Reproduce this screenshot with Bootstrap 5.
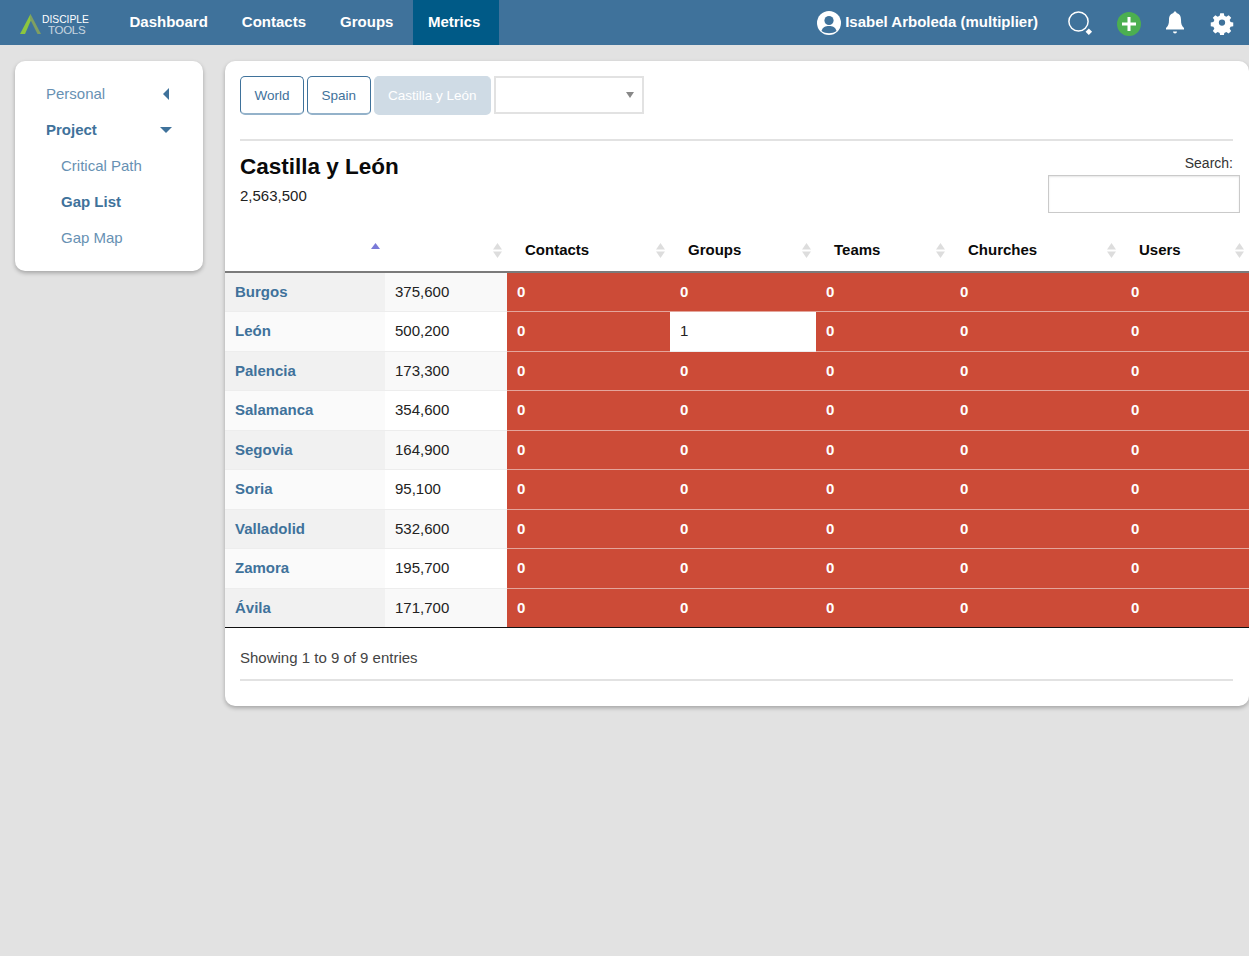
<!doctype html>
<html lang="en"><head><meta charset="utf-8"><title>Metrics</title>
<link rel="stylesheet" href="https://cdn.jsdelivr.net/npm/bootstrap@5.3.0/dist/css/bootstrap.min.css">
<style>
html,body{height:100%}
body{background:#e2e2e2;font-family:"Liberation Sans",Arial,sans-serif;font-size:15px;color:#222;overflow-x:hidden}
.topbar{background:#3f729b;height:45px}
.logo-box{width:112.5px;padding-left:20px}
.logo-words{color:#fff;font-size:10.3px;margin-left:1px;margin-top:5px}
.logo-words div{line-height:11px}
.logo-words .w2{font-size:11.500px;margin-left:6px;opacity:.7;letter-spacing:-.3px}
.top-item{color:#fff;font-weight:700;font-size:15px;padding:0 17px;height:45px;display:flex;align-items:center;text-decoration:none}
.top-item.on{background:#005a87;padding:0 19px 0 14.500px;margin-left:3px}
.who{color:#fff;font-weight:700;font-size:15px;margin-right:30px}
.ic-user{margin-right:4px;margin-top:1px}
.ic-search{margin-right:24px;margin-top:1px}
.ic-add{margin-right:24px;margin-top:2px}
.ic-bell{margin-right:25px}
.ic-gear{margin-right:15px}
.page-wrap{padding:16px 0 0 15px;gap:22px}
.panel{background:#fff;border-radius:10px;box-shadow:0 2px 4px rgba(0,0,0,.28)}
.side{width:188px;height:210px;padding:15px 0 0 31px;flex:none}
.side-item{height:36px;display:flex;align-items:center;justify-content:space-between;color:#6791b3;text-decoration:none;padding-right:34px}
.side-item.sel{color:#3f729b;font-weight:700}
.side-item.sub{padding-left:15px}
.tri-l{width:0;height:0;border:6px solid transparent;border-right:6px solid #3f729b;border-left:0}
.tri-d{width:0;height:0;border:6px solid transparent;border-top:6px solid #3f729b;border-bottom:0;margin-right:-3px}
.main-panel{flex:1 1 0;min-width:0;height:645px;padding-top:15px}
.crumbs{padding:0 15px;gap:3px;height:39px}
.crumb{font-size:13.500px;height:39px;line-height:37px;padding:0 13.500px;color:#3f729b;background:#fff;border:1px solid #3f729b;border-bottom-width:2px;border-bottom-color:#94b2ca;border-radius:5px;text-decoration:none}
.crumb.off{background:#cfdbe5;color:#fff;border-color:#cfdbe5}
.fake-select{width:150px;height:38px;border:2px solid #e2e2e2;position:relative}
.fake-select i{position:absolute;right:8px;top:14px;width:0;height:0;border:4px solid transparent;border-top:6px solid #888;border-bottom:0}
.crumb-gap{height:24px}
.rule{height:2px;background:#e2e2e2;margin:0 16px 0 15px}
.head-row{padding:0 9px 0 15px;height:92px}
.head-row h2{font-size:22.500px;font-weight:700;margin:12px 0 6px;line-height:28px;color:#0a0a0a}
.pop{font-size:15px;line-height:18px}
.search-lbl{font-size:14px;line-height:16px;text-align:right;padding:14px 7px 4px 0;color:#333}
.search-box{display:block;width:192px;height:38px;border:1px solid #cacaca;box-shadow:inset 0 1px 2px rgba(10,10,10,.1);background:#fff}
table.gap-table{width:1024px;table-layout:fixed;margin:0;border-collapse:separate;border-spacing:0;font-size:15px}
.c1{width:160px}.c2{width:122px}.c3{width:163px}.c4{width:146px}.c5{width:134px}.c6{width:171px}.c7{width:128px}
.gap-table th{height:39.500px;font-size:15px;font-weight:700;padding:0 0 3px 18px;border-bottom:2px solid #7b7b7b;position:relative;vertical-align:middle;line-height:16px;color:#0a0a0a}
.gap-table td{height:39.500px;padding:0 10px;vertical-align:middle;border-bottom:1px solid #ededed;line-height:18px}
.gap-table tr:last-child td{border-bottom:1px solid #111}
.gap-table td.nm{background:#fafafa;font-weight:700;color:#3f729b}
.gap-table td.pp{background:#fff}
.gap-table tr.odd td.nm{background:#f1f1f1}
.gap-table tr.odd td.pp{background:#f9f9f9}
.gap-table td.zero{background:#cc4b37;color:#fff;font-weight:700;border-bottom-color:#e4a59b}
.gap-table td.one{background:#fff}
.sorter{position:absolute;right:5px;top:10px;width:9px;height:15px}
.sorter.up{top:9px}
.foot-text{padding:21px 15px 0;line-height:18px;color:#444;height:43px}
</style></head><body>
<nav class="topbar d-flex align-items-stretch">
 <div class="logo-box d-flex align-items-center">
  <svg width="21" height="21" viewBox="0 0 21 21" class="mt-1"><polygon points="10.500,0 11.500,5 5,20 0,20" fill="#8cc63f"/><polygon points="10.500,0 21,20 17.500,20 10,5" fill="#7f9f62"/></svg>
  <div class="logo-words"><div>DISCIPLE</div><div class="w2">TOOLS</div></div>
 </div>
 <a class="top-item" href="#">Dashboard</a><a class="top-item" href="#">Contacts</a><a class="top-item" href="#">Groups</a><a class="top-item on" href="#">Metrics</a>
 <div class="ms-auto d-flex align-items-center">
  <svg width="24" height="24" viewBox="0 0 24 24" class="ic-user"><circle cx="12" cy="12" r="12" fill="#fff"/><circle cx="12" cy="9.500" r="4.600" fill="#3f729b"/><path d="M4.500 20c1-4 4-5 7.500-5s6.500 1 7.500 5c-4 3-11 3-15 0z" fill="#3f729b"/></svg>
  <span class="who">Isabel Arboleda (multiplier)</span>
  <svg width="25" height="25" viewBox="0 0 25 25" class="ic-search"><circle cx="10.500" cy="10.500" r="9.600" fill="none" stroke="#fff" stroke-width="1.500"/><rect x="18.500" y="18.500" width="4.600" height="4.600" transform="rotate(45 20.800 20.800)" fill="#fff"/></svg>
  <svg width="24" height="24" viewBox="0 0 24 24" class="ic-add"><circle cx="12" cy="12" r="12" fill="#4caf50"/><path d="M12 5v14M5 12h14" stroke="#fff" stroke-width="3"/></svg>
  <svg width="20" height="24" viewBox="0 0 20 24" class="ic-bell"><path d="M10 .5c1 0 1.500.7 1.500 1.500 3.500.8 4.500 3.500 4.500 7 0 4 .8 6 3 8v1.500H1V17c2.200-2 3-4 3-8 0-3.500 1-6.200 4.500-7 0-.8.500-1.500 1.500-1.500z" fill="#fff"/><path d="M8 20.500h4a2 2 0 0 1-4 0z" fill="#fff"/></svg>
  <svg width="24" height="24" viewBox="0 0 24 24" class="ic-gear" fill="#fff"><path fill-rule="evenodd" d="M10 1.500h4l.6 3 2.200 1 2.600-1.700 2.800 2.800-1.700 2.600 1 2.200 3 .6v4l-3 .6-1 2.200 1.700 2.600-2.800 2.800-2.600-1.700-2.200 1-.6 3h-4l-.6-3-2.200-1-2.600 1.700-2.800-2.800 1.700-2.600-1-2.200-3-.6v-4l3-.6 1-2.200L1.800 6.600l2.800-2.800 2.600 1.700 2.200-1zM12 8.500a3.500 3.500 0 1 0 0 7 3.500 3.500 0 0 0 0-7z" transform="translate(1.200 .8) scale(.9)"/></svg>
 </div>
</nav>
<div class="page-wrap d-flex align-items-start">
 <aside class="panel side">
  <a class="side-item" href="#">Personal<span class="tri-l"></span></a>
  <a class="side-item sel" href="#">Project<span class="tri-d"></span></a>
  <a class="side-item sub" href="#">Critical Path</a>
  <a class="side-item sub sel" href="#">Gap List</a>
  <a class="side-item sub" href="#">Gap Map</a>
 </aside>
 <main class="panel main-panel">
  <div class="crumbs d-flex"><a class="crumb" href="#">World</a><a class="crumb" href="#">Spain</a><a class="crumb off" href="#">Castilla y León</a><div class="fake-select"><i></i></div></div>
  <div class="crumb-gap"></div>
  <div class="rule"></div>
  <div class="head-row d-flex justify-content-between">
   <div><h2>Castilla y León</h2><div class="pop">2,563,500</div></div>
   <div><div class="search-lbl">Search:</div><span class="search-box"></span></div>
  </div>
  <table class="gap-table">
   <colgroup><col class="c1"><col class="c2"><col class="c3"><col class="c4"><col class="c5"><col class="c6"><col class="c7"></colgroup>
   <thead><tr>
    <th><svg class="sorter up" viewBox="0 0 9 15"><polygon points="4.500,1 9,7 0,7" fill="#7a7ad8"/></svg></th>
    <th><svg class="sorter" viewBox="0 0 9 15"><polygon points="4.500,0 9,6.500 0,6.500" fill="#ddd"/><polygon points="0,8.500 9,8.500 4.500,15" fill="#ddd"/></svg></th>
    <th>Contacts<svg class="sorter" viewBox="0 0 9 15"><polygon points="4.500,0 9,6.500 0,6.500" fill="#ddd"/><polygon points="0,8.500 9,8.500 4.500,15" fill="#ddd"/></svg></th>
    <th>Groups<svg class="sorter" viewBox="0 0 9 15"><polygon points="4.500,0 9,6.500 0,6.500" fill="#ddd"/><polygon points="0,8.500 9,8.500 4.500,15" fill="#ddd"/></svg></th>
    <th>Teams<svg class="sorter" viewBox="0 0 9 15"><polygon points="4.500,0 9,6.500 0,6.500" fill="#ddd"/><polygon points="0,8.500 9,8.500 4.500,15" fill="#ddd"/></svg></th>
    <th>Churches<svg class="sorter" viewBox="0 0 9 15"><polygon points="4.500,0 9,6.500 0,6.500" fill="#ddd"/><polygon points="0,8.500 9,8.500 4.500,15" fill="#ddd"/></svg></th>
    <th>Users<svg class="sorter" viewBox="0 0 9 15"><polygon points="4.500,0 9,6.500 0,6.500" fill="#ddd"/><polygon points="0,8.500 9,8.500 4.500,15" fill="#ddd"/></svg></th>
   </tr></thead>
   <tbody>
    <tr class="odd"><td class="nm">Burgos</td><td class="pp">375,600</td><td class="zero">0</td><td class="zero">0</td><td class="zero">0</td><td class="zero">0</td><td class="zero">0</td></tr>
    <tr><td class="nm">León</td><td class="pp">500,200</td><td class="zero">0</td><td class="one">1</td><td class="zero">0</td><td class="zero">0</td><td class="zero">0</td></tr>
    <tr class="odd"><td class="nm">Palencia</td><td class="pp">173,300</td><td class="zero">0</td><td class="zero">0</td><td class="zero">0</td><td class="zero">0</td><td class="zero">0</td></tr>
    <tr><td class="nm">Salamanca</td><td class="pp">354,600</td><td class="zero">0</td><td class="zero">0</td><td class="zero">0</td><td class="zero">0</td><td class="zero">0</td></tr>
    <tr class="odd"><td class="nm">Segovia</td><td class="pp">164,900</td><td class="zero">0</td><td class="zero">0</td><td class="zero">0</td><td class="zero">0</td><td class="zero">0</td></tr>
    <tr><td class="nm">Soria</td><td class="pp">95,100</td><td class="zero">0</td><td class="zero">0</td><td class="zero">0</td><td class="zero">0</td><td class="zero">0</td></tr>
    <tr class="odd"><td class="nm">Valladolid</td><td class="pp">532,600</td><td class="zero">0</td><td class="zero">0</td><td class="zero">0</td><td class="zero">0</td><td class="zero">0</td></tr>
    <tr><td class="nm">Zamora</td><td class="pp">195,700</td><td class="zero">0</td><td class="zero">0</td><td class="zero">0</td><td class="zero">0</td><td class="zero">0</td></tr>
    <tr class="odd"><td class="nm">Ávila</td><td class="pp">171,700</td><td class="zero">0</td><td class="zero">0</td><td class="zero">0</td><td class="zero">0</td><td class="zero">0</td></tr>
   </tbody>
  </table>
  <div class="foot-text">Showing 1 to 9 of 9 entries</div>
  <div class="rule mt-2"></div>
 </main>
</div>
<script src="https://cdn.jsdelivr.net/npm/bootstrap@5.3.0/dist/js/bootstrap.bundle.min.js"></script>
</body></html>
